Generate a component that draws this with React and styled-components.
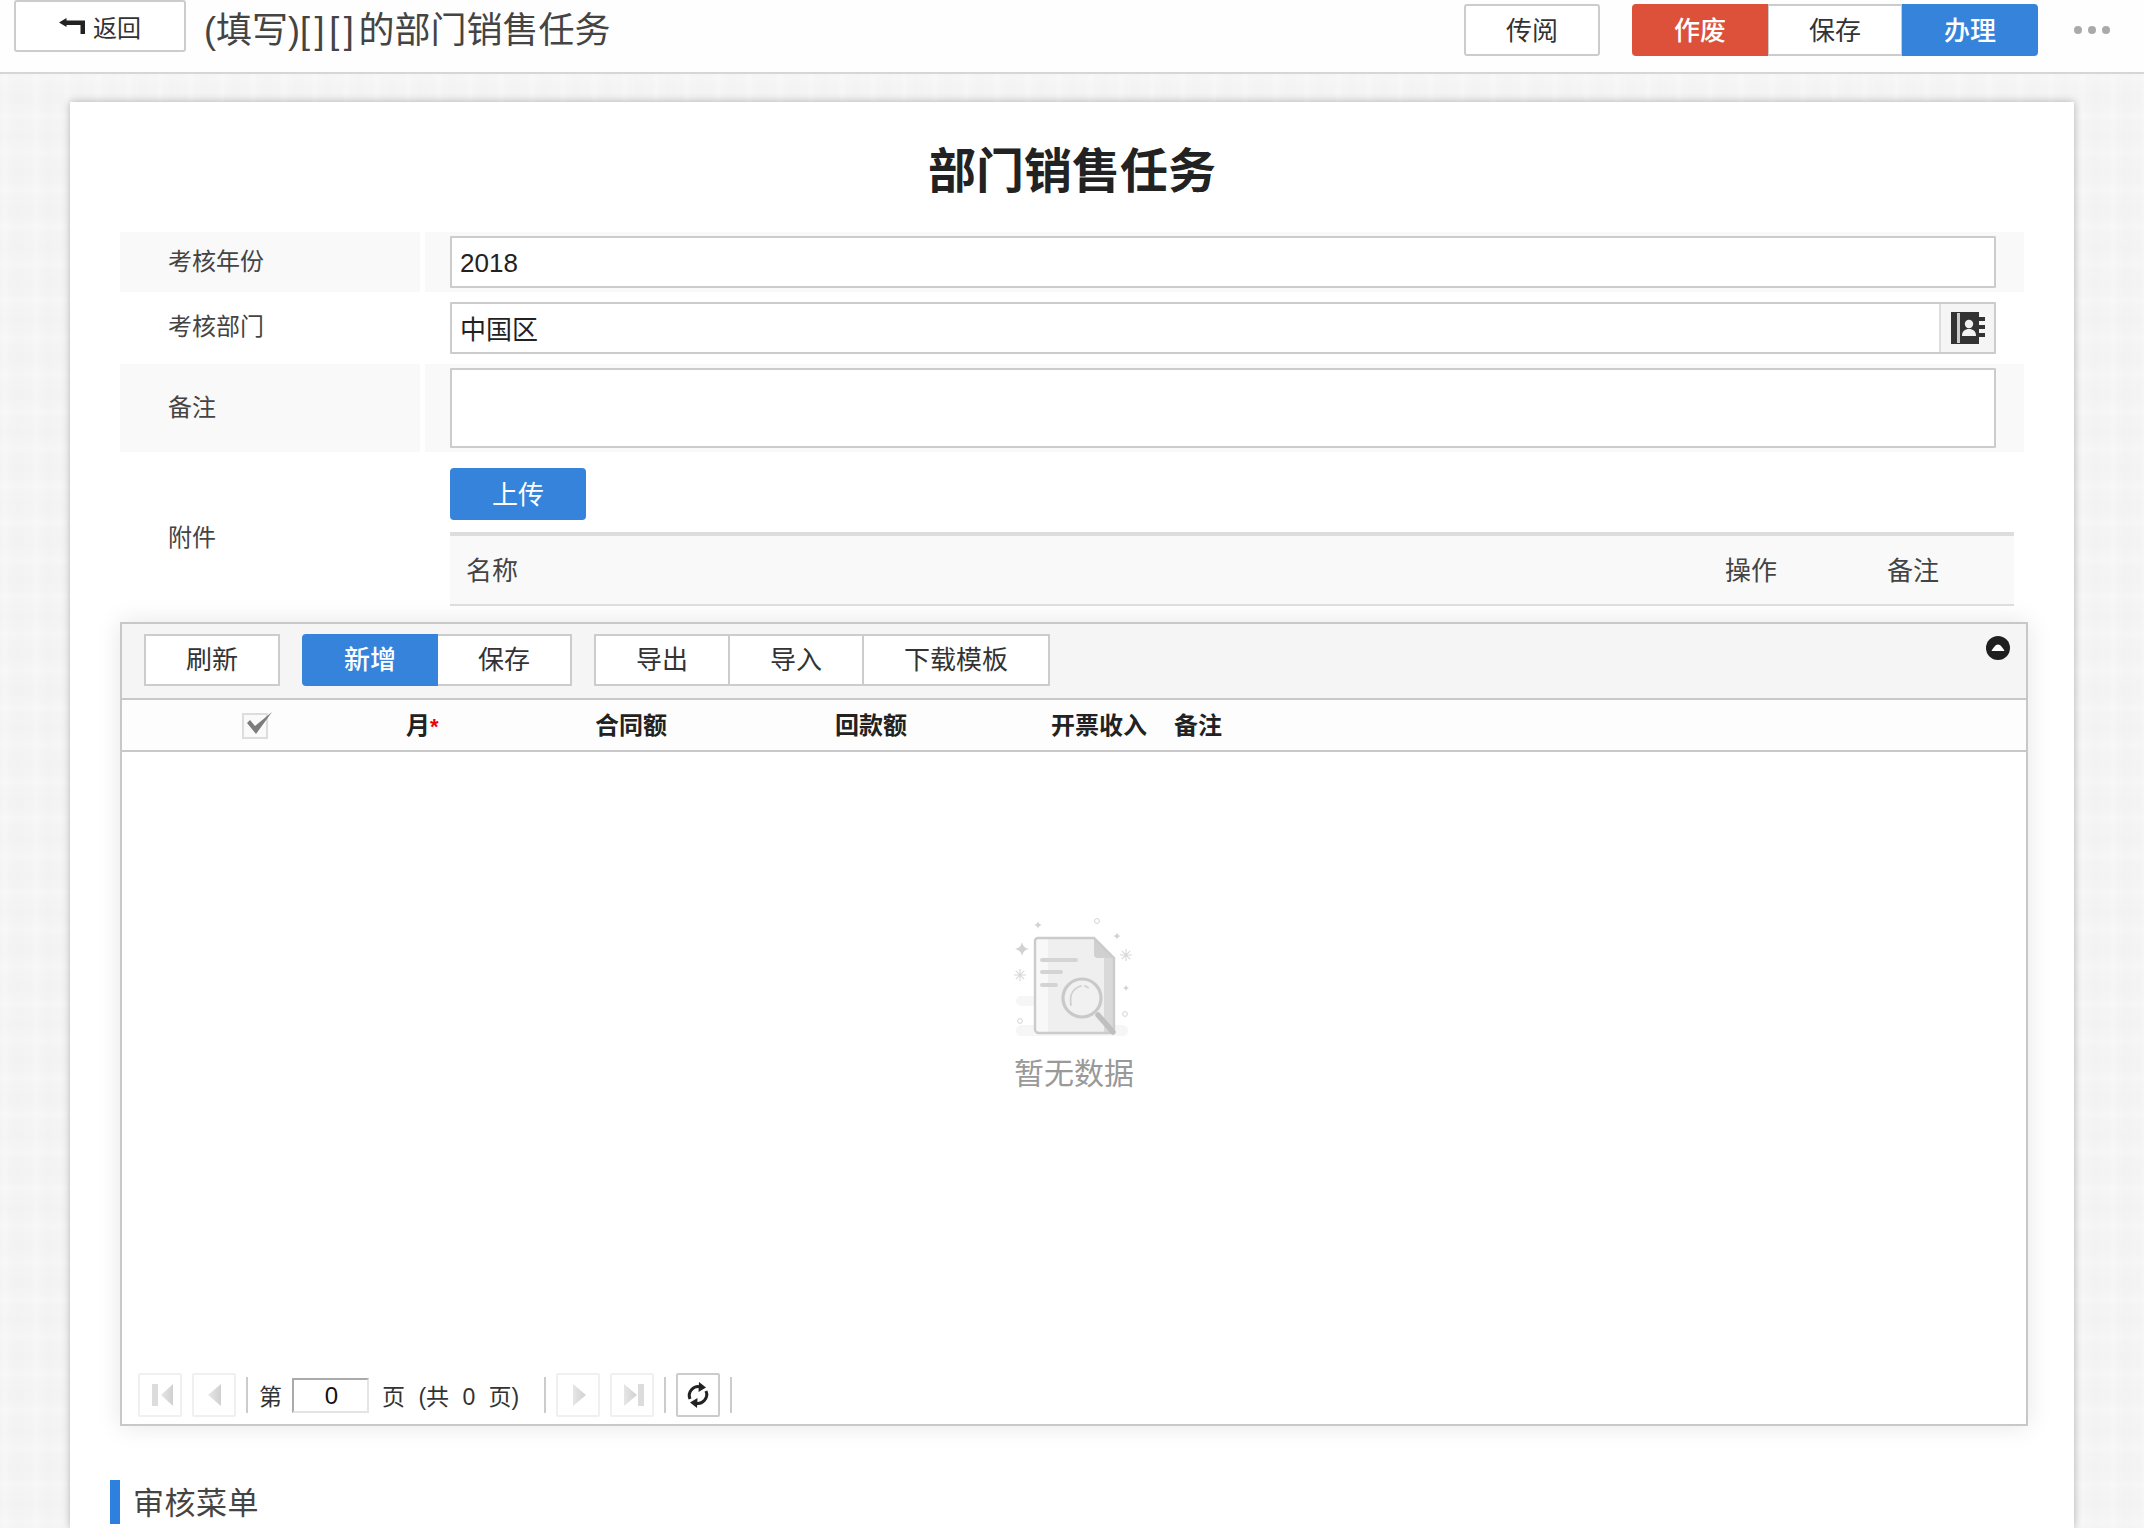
import React from "react";
import styled, { createGlobalStyle } from "styled-components";

const Global = createGlobalStyle`
  html, body { margin: 0; padding: 0; background: #fff; }
  body { font-family: "Liberation Sans", "Noto Sans CJK SC", sans-serif; color: #333; }
  * { box-sizing: border-box; }
`;

const Page = styled.div`
  height: 1528px;
  overflow: hidden;
  display: flex;
  flex-direction: column;
  background-color: #f4f4f4;
  background-image:
    repeating-linear-gradient(90deg, rgba(255,255,255,0) 0, rgba(255,255,255,.24) 5px, rgba(255,255,255,0) 10px, rgba(0,0,0,.005) 17px, rgba(255,255,255,0) 31px),
    repeating-linear-gradient(0deg, rgba(255,255,255,0) 0, rgba(255,255,255,.22) 6px, rgba(255,255,255,0) 13px, rgba(0,0,0,.005) 22px, rgba(255,255,255,0) 37px);
`;

const TopBar = styled.header`
  height: 74px;
  flex: none;
  background: #fefefe;
  border-bottom: 2px solid #d6d6d6;
  display: flex;
  align-items: flex-start;
  padding: 0 0 0 14px;
`;

const BackButton = styled.button`
  width: 172px;
  height: 52px;
  background: #fff;
  border: 2px solid #ccc;
  border-radius: 3px;
  display: flex;
  align-items: center;
  justify-content: center;
  gap: 8px;
  padding: 0;
  font: inherit;
  font-size: 24px;
  color: #333;
`;

const PageTitle = styled.h1`
  margin: 7px 0 0 18px;
  font-size: 36px;
  line-height: 48px;
  font-weight: 400;
  color: #444;
  white-space: nowrap;
`;

const Brackets = styled.span`
  letter-spacing: 4.6px;
`;

const TopActions = styled.div`
  margin-left: auto;
  display: flex;
  align-items: center;
  padding-top: 4px;
`;

const Group = styled.div`
  display: flex;
  margin-left: ${p => p.$ml || 0}px;
`;

const Btn = styled.button`
  position: relative;
  z-index: ${p => (p.$front ? 1 : 0)};
  height: 52px;
  padding: 0 40px 3px;
  margin-left: ${p => (p.$first ? 0 : -1)}px;
  font: inherit;
  font-size: 26px;
  font-weight: ${p => (p.$tone ? 500 : 400)};
  color: ${p => (p.$tone ? "#fff" : "#333")};
  background: ${p => (p.$tone === "red" ? "#dd5039" : p.$tone === "blue" ? "#3583db" : "#fff")};
  border: 2px solid ${p => (p.$tone === "red" ? "#dd5039" : p.$tone === "blue" ? "#3583db" : "#ccc")};
  border-radius: ${p => p.$radius || "0"};
  white-space: nowrap;
`;

const ToolBtn = styled(Btn)`
  padding-bottom: 5px;
  margin-left: ${p => (p.$first ? 0 : -2)}px;
`;

const Dots = styled.div`
  display: flex;
  gap: 6px;
  margin: 0 34px 0 36px;
`;

const Dot = styled.i`
  width: 8px;
  height: 8px;
  border-radius: 50%;
  background: #aaa;
`;

const Card = styled.main`
  width: 2004px;
  flex: 1;
  margin: 28px 0 0 70px;
  padding: 0 50px;
  background: #fff;
  box-shadow: 0 0 8px rgba(0, 0, 0, .28);
`;

const FormTitle = styled.h2`
  margin: 0;
  height: 130px;
  padding-top: 40px;
  text-align: center;
  font-size: 48px;
  line-height: 60px;
  font-weight: 700;
  color: #222;
`;

const Row = styled.div`
  display: grid;
  grid-template-columns: 300px 1fr;
  column-gap: 5px;
  height: ${p => p.$h}px;
`;

const Label = styled.div`
  display: flex;
  align-items: center;
  padding: 0 0 ${p => p.$pb || 0}px 48px;
  font-size: 24px;
  color: #444;
  background: ${p => (p.$shade ? "#f9f9f9" : "transparent")};
`;

const Value = styled.div`
  display: flex;
  align-items: flex-start;
  padding: ${p => p.$pt || 0}px 28px 0 25px;
  background: ${p => (p.$shade ? "#f9f9f9" : "transparent")};
`;

const FieldBox = styled.div`
  flex: 1;
  height: ${p => p.$h || 52}px;
  display: flex;
  background: #fff;
  border: 2px solid #ccc;
  border-radius: 1px;
`;

const Field = styled.input`
  flex: 1;
  min-width: 0;
  border: 0;
  outline: 0;
  padding: ${p => p.$pt || 0}px 8px ${p => p.$pb || 0}px;
  background: transparent;
  font: inherit;
  font-size: 26px;
  color: #222;
`;

const Area = styled.textarea`
  flex: 1;
  border: 0;
  outline: 0;
  resize: none;
  background: transparent;
`;

const Addon = styled.div`
  width: 55px;
  flex: none;
  display: flex;
  align-items: center;
  justify-content: center;
  background: #f5f5f5;
  border-left: 2px solid #ddd;
`;

const AttachRow = styled.div`
  display: grid;
  grid-template-columns: 305px 1fr;
`;

const AttachLabel = styled.div`
  display: flex;
  align-items: center;
  padding: 12px 0 0 48px;
  font-size: 24px;
  color: #444;
`;

const AttachBody = styled.div`
  padding: 16px 10px 0 25px;
`;

const Upload = styled.button`
  display: block;
  width: 136px;
  height: 52px;
  border: 0;
  border-radius: 4px;
  padding: 0 0 3px;
  background: #3583db;
  color: #fff;
  font: inherit;
  font-size: 26px;
`;

const FileHead = styled.div`
  margin-top: 12px;
  height: 74px;
  display: grid;
  grid-template-columns: 1275px 162px 127px;
  align-items: center;
  padding-bottom: 3px;
  background: #f9f9f9;
  border-top: 4px solid #ddd;
  border-bottom: 2px solid #ddd;
  font-size: 26px;
  color: #444;
`;

const FileCell = styled.div`
  padding-left: ${p => p.$pl || 0}px;
`;

const Panel = styled.section`
  margin: 16px -4px 0 0;
  height: 804px;
  display: flex;
  flex-direction: column;
  background: #fff;
  border: 2px solid #c8c8c8;
  box-shadow: 0 0 24px rgba(0, 0, 0, .1);
`;

const Toolbar = styled.div`
  height: 76px;
  flex: none;
  display: flex;
  align-items: flex-start;
  padding: 10px 16px 0 22px;
  background: #f5f5f5;
  border-bottom: 2px solid #c8c8c8;
`;

const Collapse = styled.span`
  margin: 2px 0 0 auto;
  display: flex;
`;

const GridHead = styled.div`
  height: 52px;
  flex: none;
  display: grid;
  grid-template-columns: 284px 189px 240px 216px 123px 1fr;
  align-items: center;
  padding-bottom: 4px;
  background: #fdfdfd;
  border-bottom: 2px solid #c8c8c8;
  font-size: 24px;
  font-weight: 700;
  color: #222;
`;

const CheckCell = styled.div`
  padding-left: 120px;
  display: flex;
  margin-top: 3px;
`;

const Required = styled.span`
  color: #e00;
  font-size: 22px;
`;

const Empty = styled.div`
  flex: 1;
  display: flex;
  flex-direction: column;
  align-items: center;
  padding-top: 166px;
`;

const EmptyText = styled.div`
  margin-top: 16px;
  font-size: 30px;
  line-height: 40px;
  color: #999;
`;

const Pager = styled.div`
  height: 54px;
  flex: none;
  display: flex;
  align-items: center;
  gap: 10px;
  padding: 0 0 4px 16px;
`;

const PagerBtn = styled.span`
  width: 44px;
  height: 44px;
  display: flex;
  align-items: center;
  justify-content: center;
  border: 2px solid ${p => (p.$active ? "#ccc" : "#f0f0f0")};
  border-radius: 2px;
`;

const Sep = styled.i`
  width: 2px;
  height: 36px;
  background: #ccc;
  margin-left: ${p => p.$ml || 0}px;
`;

const PagerText = styled.span`
  font-size: 23px;
  color: #333;
  white-space: nowrap;
  word-spacing: 7px;
  margin-left: ${p => p.$ml || 0}px;
`;

const PageInput = styled.input`
  width: 77px;
  height: 35px;
  border: 2px solid #e4e4e4;
  border-top-color: #aaa;
  border-left-color: #aaa;
  outline: 0;
  text-align: center;
  font: inherit;
  font-size: 24px;
  color: #111;
  padding: 2px 0 0 2px;
`;

const Section = styled.h3`
  margin: 54px 0 0 -10px;
  height: 44px;
  display: flex;
  align-items: center;
  padding: 0 0 4px 13px;
  border-left: 10px solid #2e80de;
  font-size: 31px;
  letter-spacing: .5px;
  font-weight: 400;
  color: #444;
`;

const BackIcon = () => (
  <svg width="26" height="16" viewBox="0 0 26 16">
    <path d="M0 4.5 L7.5 0 V2.5 H26 V16 H21.5 V7 H7.5 V9 Z" fill="#222" />
  </svg>
);

const BookIcon = () => (
  <svg width="34" height="32" viewBox="0 0 34 32">
    <path d="M0 0H28V5H34V9H28V13H34V17H28V21H34V25H28V32H0Z" fill="#333" />
    <rect x="6" y="1" width="3" height="30" fill="#ccc" />
    <circle cx="18" cy="12" r="4.2" fill="#f2f2f2" />
    <path d="M11 24c0-5 3-7 7-7s7 2 7 7z" fill="#f2f2f2" />
  </svg>
);

const CollapseIcon = () => (
  <svg width="24" height="24" viewBox="0 0 24 24">
    <circle cx="12" cy="12" r="12" fill="#1f1f1f" />
    <path d="M5.5 15 C7 12 9.5 8.5 12 8.5 S17 12 18.5 15Z" fill="#fff" />
  </svg>
);

const CheckIcon = () => (
  <svg width="32" height="28" viewBox="0 0 32 28" overflow="visible">
    <rect x="1" y="3" width="24" height="24" fill="#fafafa" stroke="#ddd" strokeWidth="2" />
    <path d="M5 12 L8 9 L13 15 L30 1 L14 23Z" fill="#7c7c7c" />
  </svg>
);

const Star = ({ x, y, r }) => (
  <path
    d={`M${x} ${y - r} Q${x + r * 0.15} ${y - r * 0.15} ${x + r} ${y} Q${x + r * 0.15} ${y + r * 0.15} ${x} ${y + r} Q${x - r * 0.15} ${y + r * 0.15} ${x - r} ${y} Q${x - r * 0.15} ${y - r * 0.15} ${x} ${y - r}Z`}
    fill="#d2d2d2"
  />
);

const Aster = ({ x, y, r }) => (
  <path
    d={`M${x - r} ${y}H${x + r}M${x} ${y - r}V${y + r}M${x - r * 0.7} ${y - r * 0.7}L${x + r * 0.7} ${y + r * 0.7}M${x + r * 0.7} ${y - r * 0.7}L${x - r * 0.7} ${y + r * 0.7}`}
    stroke="#d8d8d8"
    strokeWidth="1.1"
  />
);

const Ring = ({ x, y }) => <circle cx={x} cy={y} r="2.4" fill="none" stroke="#d4d4d4" strokeWidth="1" />;

const EmptyIcon = () => (
  <svg width="120" height="120" viewBox="0 0 120 120">
    <rect x="2" y="107" width="112" height="11" rx="5.5" fill="#f6f6f6" />
    <rect x="2" y="78" width="24" height="10" rx="5" fill="#f6f6f6" />
    <path d="M24 20H80L100 40V111a4 4 0 0 1-4 4H25a4 4 0 0 1-4-4V23a3 3 0 0 1 3-3Z" fill="#efefef" />
    <path d="M24 20H34V115H25a4 4 0 0 1-4-4V23a3 3 0 0 1 3-3Z" fill="#f8f8f8" />
    <path d="M90 30L100 40V111a4 4 0 0 1-4 4H90Z" fill="#d9d9d9" />
    <path d="M80 20V36a4 4 0 0 0 4 4H100Z" fill="#d0d0d0" />
    <path d="M24 20H80L100 40V111a4 4 0 0 1-4 4H25a4 4 0 0 1-4-4V23a3 3 0 0 1 3-3Z" fill="none" stroke="#cbcbcb" strokeWidth="2.4" />
    <path d="M28 42H62M28 54H47M28 67H42" stroke="#d4d4d4" strokeWidth="4" strokeLinecap="round" />
    <line x1="84" y1="97" x2="99" y2="114" stroke="#bfbfbf" strokeWidth="5.5" strokeLinecap="round" />
    <circle cx="68" cy="80" r="19" fill="#f1f1f1" stroke="#c9c9c9" strokeWidth="3.2" />
    <path d="M57 87C55 76 60 70 67 68" fill="none" stroke="#cfcfcf" strokeWidth="1.8" strokeLinecap="round" />
    <path d="M71 68l3 1.5" stroke="#cfcfcf" strokeWidth="1.8" strokeLinecap="round" />
    <Star x={8} y={31} r={7} />
    <Star x={24} y={7} r={4} />
    <Star x={103} y={18} r={3.5} />
    <Star x={112} y={70} r={3} />
    <Aster x={6} y={57} r={6} />
    <Aster x={112} y={37} r={6} />
    <Ring x={83} y={3} />
    <Ring x={6} y={103} />
    <Ring x={111} y={96} />
  </svg>
);

const NavDefs = () => (
  <svg width="0" height="0" style={{ position: "absolute" }}>
    <defs>
      <linearGradient id="navGrad" x1="0" x2="1" y1="0" y2="0">
        <stop offset="0" stopColor="#e6e6e6" />
        <stop offset="1" stopColor="#d0d0d0" />
      </linearGradient>
    </defs>
  </svg>
);

const NavIcon = ({ kind }) => {
  const shapes = {
    first: (
      <>
        <rect x="4" y="2" width="6" height="22" fill="#dcdcdc" />
        <path d="M25 2V24L13 13Z" fill="url(#navGrad)" />
      </>
    ),
    prev: <path d="M19 2V24L6 13Z" fill="url(#navGrad)" />,
    next: <path d="M7 2V24L20 13Z" fill="url(#navGrad)" />,
    last: (
      <>
        <path d="M4 2V24L17 13Z" fill="url(#navGrad)" />
        <rect x="18" y="2" width="6" height="22" fill="#dcdcdc" />
      </>
    ),
  };
  return <svg width="24" height="26" viewBox="0 0 24 26" overflow="visible">{shapes[kind]}</svg>;
};

const RefreshIcon = () => (
  <svg width="24" height="26" viewBox="0 0 24 26">
    <path d="M4 17A9 9 0 0 1 15 5" fill="none" stroke="#222" strokeWidth="3" />
    <path d="M13 0L20 5.5L12.5 10Z" fill="#222" />
    <path d="M20 9A9 9 0 0 1 9 21" fill="none" stroke="#222" strokeWidth="3" />
    <path d="M11 26L4 20.5L11.5 16Z" fill="#222" />
  </svg>
);

export default function App() {
  return (
    <Page>
      <Global />
      <NavDefs />
      <TopBar>
        <BackButton>
          <BackIcon />
          返回
        </BackButton>
        <PageTitle>
          (填写)<Brackets>[][]</Brackets>的部门销售任务
        </PageTitle>
        <TopActions>
          <Btn $first $radius="3px">传阅</Btn>
          <Group $ml={32}>
            <Btn $first $front $tone="red" $radius="4px 0 0 4px">作废</Btn>
            <Btn>保存</Btn>
            <Btn $tone="blue" $radius="0 4px 4px 0">办理</Btn>
          </Group>
          <Dots>
            <Dot />
            <Dot />
            <Dot />
          </Dots>
        </TopActions>
      </TopBar>
      <Card>
        <FormTitle>部门销售任务</FormTitle>
        <Row $h={60}>
          <Label $shade $pb={5}>考核年份</Label>
          <Value $shade $pt={4}>
            <FieldBox>
              <Field readOnly value="2018" $pt={3} />
            </FieldBox>
          </Value>
        </Row>
        <Row $h={72}>
          <Label $pb={7}>考核部门</Label>
          <Value $pt={10}>
            <FieldBox>
              <Field readOnly value="中国区" $pb={2} />
              <Addon>
                <BookIcon />
              </Addon>
            </FieldBox>
          </Value>
        </Row>
        <Row $h={88}>
          <Label $shade $pb={5}>备注</Label>
          <Value $shade $pt={4}>
            <FieldBox $h={80}>
              <Area readOnly />
            </FieldBox>
          </Value>
        </Row>
        <AttachRow>
          <AttachLabel>附件</AttachLabel>
          <AttachBody>
            <Upload>上传</Upload>
            <FileHead>
              <FileCell $pl={16}>名称</FileCell>
              <FileCell>操作</FileCell>
              <FileCell>备注</FileCell>
            </FileHead>
          </AttachBody>
        </AttachRow>
        <Panel>
          <Toolbar>
            <Group>
              <ToolBtn $first>刷新</ToolBtn>
            </Group>
            <Group $ml={22}>
              <ToolBtn $first $front $tone="blue" $radius="4px 0 0 4px">新增</ToolBtn>
              <ToolBtn>保存</ToolBtn>
            </Group>
            <Group $ml={22}>
              <ToolBtn $first>导出</ToolBtn>
              <ToolBtn>导入</ToolBtn>
              <ToolBtn>下载模板</ToolBtn>
            </Group>
            <Collapse>
              <CollapseIcon />
            </Collapse>
          </Toolbar>
          <GridHead>
            <CheckCell>
              <CheckIcon />
            </CheckCell>
            <div>
              月<Required>*</Required>
            </div>
            <div>合同额</div>
            <div>回款额</div>
            <div>开票收入</div>
            <div>备注</div>
          </GridHead>
          <Empty>
            <EmptyIcon />
            <EmptyText>暂无数据</EmptyText>
          </Empty>
          <Pager>
            <PagerBtn><NavIcon kind="first" /></PagerBtn>
            <PagerBtn><NavIcon kind="prev" /></PagerBtn>
            <Sep />
            <PagerText $ml={1}>第</PagerText>
            <PageInput readOnly value="0" />
            <PagerText $ml={3}>页 (共 0 页)</PagerText>
            <Sep $ml={15} />
            <PagerBtn><NavIcon kind="next" /></PagerBtn>
            <PagerBtn><NavIcon kind="last" /></PagerBtn>
            <Sep />
            <PagerBtn $active><RefreshIcon /></PagerBtn>
            <Sep />
          </Pager>
        </Panel>
        <Section>审核菜单</Section>
      </Card>
    </Page>
  );
}
